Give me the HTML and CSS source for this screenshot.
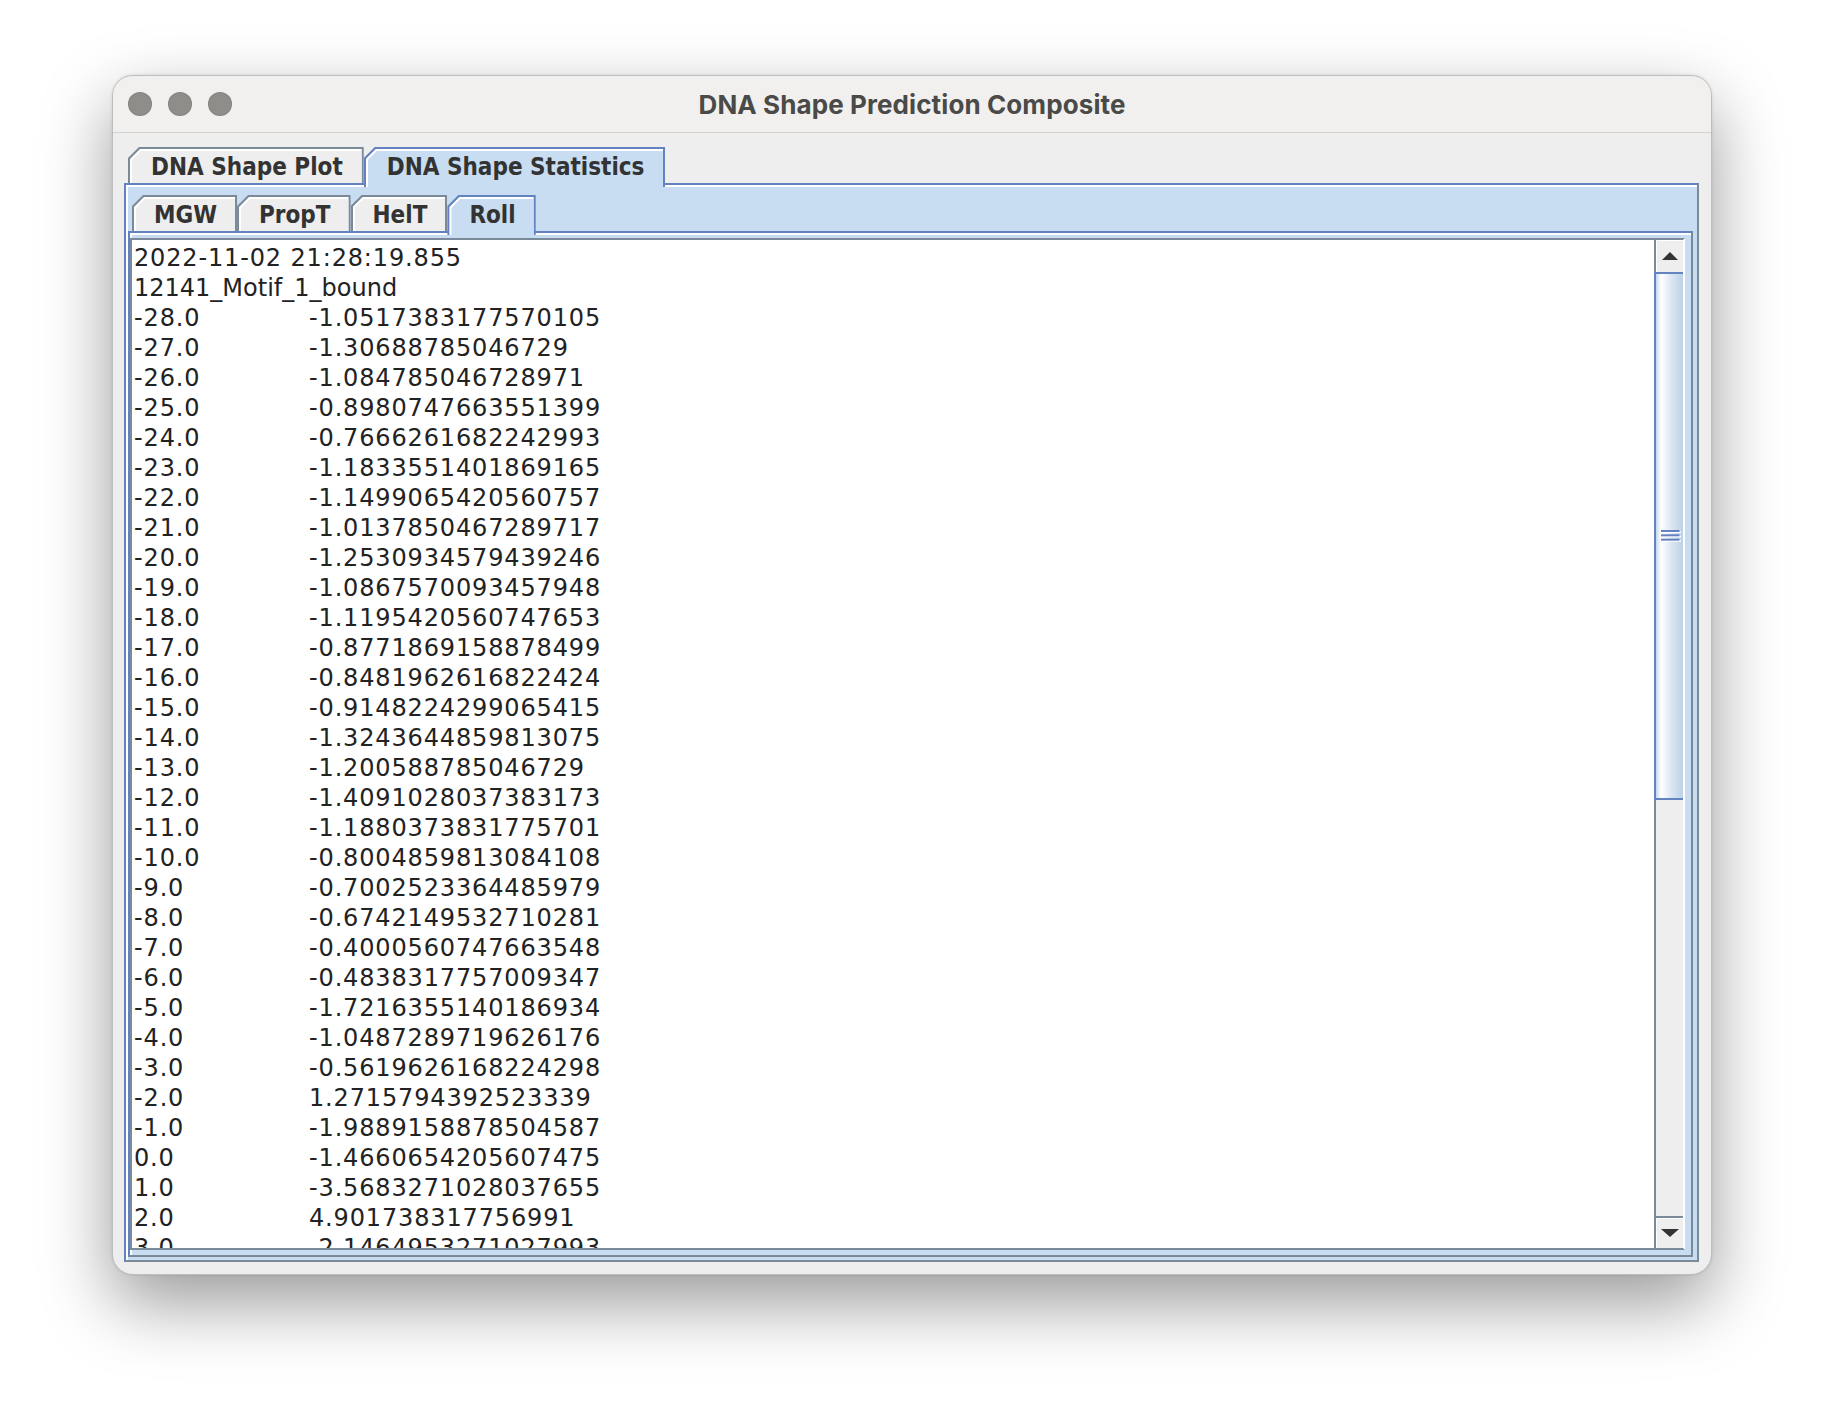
FILE: index.html
```html
<!DOCTYPE html>
<html>
<head>
<meta charset="utf-8">
<title>DNA Shape Prediction Composite</title>
<link rel="stylesheet" href="styles.css">
</head>
<body>
<div class="window">
  <div class="titlebar">
    <div class="lights"><span class="light"></span><span class="light"></span><span class="light"></span></div>
    <div class="title">DNA Shape Prediction Composite</div>
    <div></div>
  </div>
  <div class="content">
    <div class="tabpane outer">
      <div class="tabs">
        <div class="tab wide"><div class="tab-hl"><div class="tab-fill">DNA Shape Plot</div></div></div>
        <div class="tab wide sel"><div class="tab-hl"><div class="tab-fill">DNA Shape Statistics</div></div></div>
      </div>
      <div class="panel outer-panel">
        <div class="tabpane inner">
          <div class="tabs">
            <div class="tab"><div class="tab-hl"><div class="tab-fill">MGW</div></div></div>
            <div class="tab"><div class="tab-hl"><div class="tab-fill">PropT</div></div></div>
            <div class="tab"><div class="tab-hl"><div class="tab-fill">HelT</div></div></div>
            <div class="tab sel"><div class="tab-hl"><div class="tab-fill">Roll</div></div></div>
          </div>
          <div class="panel inner-panel">
            <div class="scrollpane">
              <div class="viewport">
                <div class="line">2022-11-02 21:28:19.855</div>
                <div class="line name">12141_Motif_1_bound</div>
                <div class="row"><span>-28.0</span><span>-1.0517383177570105</span></div>
                <div class="row"><span>-27.0</span><span>-1.30688785046729</span></div>
                <div class="row"><span>-26.0</span><span>-1.084785046728971</span></div>
                <div class="row"><span>-25.0</span><span>-0.8980747663551399</span></div>
                <div class="row"><span>-24.0</span><span>-0.7666261682242993</span></div>
                <div class="row"><span>-23.0</span><span>-1.1833551401869165</span></div>
                <div class="row"><span>-22.0</span><span>-1.1499065420560757</span></div>
                <div class="row"><span>-21.0</span><span>-1.0137850467289717</span></div>
                <div class="row"><span>-20.0</span><span>-1.2530934579439246</span></div>
                <div class="row"><span>-19.0</span><span>-1.0867570093457948</span></div>
                <div class="row"><span>-18.0</span><span>-1.1195420560747653</span></div>
                <div class="row"><span>-17.0</span><span>-0.8771869158878499</span></div>
                <div class="row"><span>-16.0</span><span>-0.8481962616822424</span></div>
                <div class="row"><span>-15.0</span><span>-0.9148224299065415</span></div>
                <div class="row"><span>-14.0</span><span>-1.3243644859813075</span></div>
                <div class="row"><span>-13.0</span><span>-1.200588785046729</span></div>
                <div class="row"><span>-12.0</span><span>-1.4091028037383173</span></div>
                <div class="row"><span>-11.0</span><span>-1.1880373831775701</span></div>
                <div class="row"><span>-10.0</span><span>-0.8004859813084108</span></div>
                <div class="row"><span>-9.0</span><span>-0.7002523364485979</span></div>
                <div class="row"><span>-8.0</span><span>-0.6742149532710281</span></div>
                <div class="row"><span>-7.0</span><span>-0.4000560747663548</span></div>
                <div class="row"><span>-6.0</span><span>-0.4838317757009347</span></div>
                <div class="row"><span>-5.0</span><span>-1.7216355140186934</span></div>
                <div class="row"><span>-4.0</span><span>-1.0487289719626176</span></div>
                <div class="row"><span>-3.0</span><span>-0.5619626168224298</span></div>
                <div class="row"><span>-2.0</span><span>1.2715794392523339</span></div>
                <div class="row"><span>-1.0</span><span>-1.9889158878504587</span></div>
                <div class="row"><span>0.0</span><span>-1.4660654205607475</span></div>
                <div class="row"><span>1.0</span><span>-3.5683271028037655</span></div>
                <div class="row"><span>2.0</span><span>4.901738317756991</span></div>
                <div class="row"><span>3.0</span><span>-2.1464953271027993</span></div>
              </div>
              <div class="scrollbar">
                <div class="sb-btn">
                  <svg width="16" height="8" viewBox="0 0 16 8"><polygon points="8,0 16,8 0,8" fill="#333"/></svg>
                </div>
                <div class="thumb">
                  <svg width="21" height="13" viewBox="0 0 21 13">
                    <rect x="1.5" y="1.5" width="18.5" height="1.6" fill="#fff"/>
                    <rect x="0" y="0" width="18.5" height="2" fill="#6382bf"/>
                    <rect x="1.5" y="5.8" width="18.5" height="1.6" fill="#fff"/>
                    <rect x="0" y="4.33" width="18.5" height="2" fill="#6382bf"/>
                    <rect x="1.5" y="10.1" width="18.5" height="1.6" fill="#fff"/>
                    <rect x="0" y="8.66" width="18.5" height="2" fill="#6382bf"/>
                  </svg>
                </div>
                <div class="track"></div>
                <div class="sb-btn down">
                  <svg width="18" height="8" viewBox="0 0 18 8"><polygon points="0,0 18,0 9,8" fill="#333"/></svg>
                </div>
              </div>
            </div>
          </div>
        </div>
      </div>
    </div>
  </div>
</div>
</body>
</html>
```

FILE: styles.css
```css
* { box-sizing: border-box; }

html, body {
  margin: 0;
  padding: 0;
  background: #ffffff;
}

body {
  width: 1824px;
  height: 1424px;
  overflow: hidden;
  font-family: "DejaVu Sans", sans-serif;
}

.window {
  margin: 75px 0 0 112px;
  width: 1600px;
  height: 1200px;
  border: 1px solid rgba(0, 0, 0, 0.2);
  border-radius: 21px;
  background: #eeeeee;
  box-shadow: 0 28px 70px rgba(0, 0, 0, 0.40), 0 0 3px rgba(0, 0, 0, 0.12);
  display: flex;
  flex-direction: column;
  overflow: hidden;
}

.titlebar {
  flex: none;
  height: 57px;
  background: #f1f0ee;
  border-bottom: 1px solid #d3d2d0;
  display: grid;
  grid-template-columns: 1fr auto 1fr;
  align-items: center;
}

.lights {
  display: flex;
  gap: 16px;
  padding-left: 15px;
}

.light {
  width: 24px;
  height: 24px;
  border-radius: 50%;
  background: #8e8d8a;
  box-shadow: inset 0 0 0 1px rgba(0, 0, 0, 0.08);
}

.title {
  font-family: Inter, "Open Sans", sans-serif;
  font-weight: 700;
  font-size: 26px;
  color: #4a4a48;
  letter-spacing: 0.1px;
}

.content {
  flex: 1;
  min-height: 0;
  display: flex;
  padding: 14px 12px 12px 11px;
}

.tabpane {
  flex: 1;
  min-height: 0;
  min-width: 0;
  display: flex;
  flex-direction: column;
}

.tabs {
  flex: none;
  height: 36px;
  display: flex;
  align-items: flex-start;
  padding-left: 4px;
}

.tab {
  position: relative;
  z-index: 1;
  height: 36px;
  display: flex;
  padding: 2px 2px 0 2px;
  background: #7a8a99;
  clip-path: polygon(0 100%, 0 11px, 11px 0, 100% 0, 100% 100%);
}

.tab-hl {
  flex: 1;
  display: flex;
  padding: 2px 0 0 2px;
  background: #ffffff;
  clip-path: polygon(0 100%, 0 10px, 10px 0, 100% 0, 100% 100%);
}

.tab-fill {
  flex: 1;
  background: #eeeeee;
  clip-path: polygon(0 100%, 0 9px, 9px 0, 100% 0, 100% 100%);
  padding: 2px 18px 0 18px;
  font-family: "DejaVu Sans Condensed", "DejaVu Sans", sans-serif;
  font-stretch: semi-condensed;
  font-weight: 700;
  font-size: 24px;
  line-height: 28px;
  color: #333333;
  white-space: nowrap;
}

.tab.wide .tab-fill {
  padding: 2px 19px 0 19px;
}

.tab.sel {
  height: 40px;
  background: #6382bf;
}

.tab.sel .tab-fill {
  background: #c8ddf2;
}

.panel {
  flex: 1;
  min-height: 0;
  min-width: 0;
  display: flex;
  background: #c8ddf2;
  border-top: 2px solid #6382bf;
  border-left: 2px solid #6382bf;
  border-right: 2px solid #7a8a99;
  border-bottom: 2px solid #7a8a99;
  box-shadow: inset 2px 2px 0 #ffffff;
}

.outer-panel {
  padding: 10px 4px 3px 2px;
}

.inner-panel {
  padding: 5px 6px 5px 0;
}

.scrollpane {
  flex: 1;
  min-height: 0;
  min-width: 0;
  display: flex;
  border-top: 2px solid #7a8a99;
  border-left: 2px solid #7a8a99;
  border-bottom: 2px solid #7a8a99;
  border-right: 2px solid #ffffff;
}

.viewport {
  flex: 1;
  min-height: 0;
  min-width: 0;
  background: #ffffff;
  overflow: hidden;
  padding: 3px 0 0 2px;
  font-family: "DejaVu Sans", sans-serif;
  font-size: 24px;
  letter-spacing: 0.85px;
  color: #222222;
}

.line, .row {
  height: 30px;
  line-height: 30px;
  white-space: pre;
}

.line.name {
  letter-spacing: 0;
}

.row {
  display: grid;
  grid-template-columns: 175px auto;
}

.scrollbar {
  flex: none;
  width: 29px;
  display: flex;
  flex-direction: column;
  background: #eeeeee;
  border-left: 2px solid #7a8a99;
}

.sb-btn {
  flex: none;
  height: 32px;
  display: flex;
  align-items: center;
  justify-content: center;
  background: #eeeeee;
  box-shadow: inset 1px 1px 0 #ffffff;
}

.sb-btn.down {
  border-top: 2px solid #7a8a99;
}

.thumb {
  flex: none;
  height: 528px;
  margin-left: -2px;
  border: 2px solid #6382bf;
  border-right: 0;
  background: linear-gradient(to right, #c6d8ee 0px, #ffffff 5px, #f6f9fc 8px, #dce7f4 15px, #bcd1e7 27px);
  display: flex;
  align-items: center;
  justify-content: center;
  padding-left: 4px;
}

.track {
  flex: 1;
  background: #eeeeee;
}
```
